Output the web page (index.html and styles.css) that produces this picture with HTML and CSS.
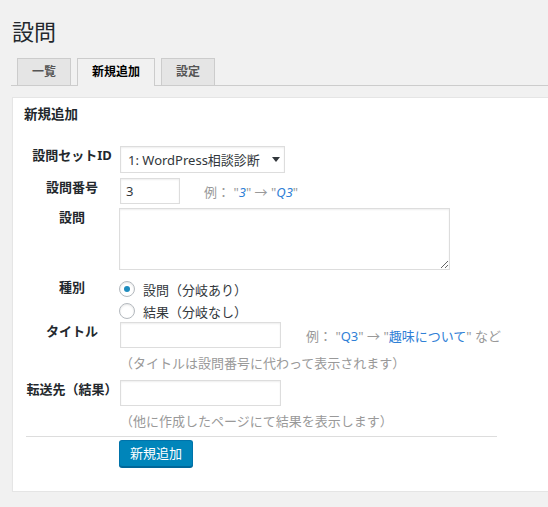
FILE: index.html
```html
<!DOCTYPE html>
<html lang="ja">
<head>
<meta charset="utf-8">
<title>設問</title>
<link rel="stylesheet" href="styles.css">
</head>
<body>
<div class="wrap">
  <h1 class="page-title">設問</h1>
  <nav class="tabs">
    <a class="tab">一覧</a>
    <a class="tab tab-active">新規追加</a>
    <a class="tab">設定</a>
  </nav>
  <section class="panel">
    <h2 class="panel-title">新規追加</h2>
    <div class="row row-set">
      <div class="lbl">設問セットID</div>
      <div class="fld">
        <span class="select-wrap">
          <select class="select"><option>1: WordPress相談診断</option></select>
          <svg class="select-arrow" width="8" height="5" viewBox="0 0 8 5"><path d="M0 0H8L4 5Z" fill="#32373c"/></svg>
        </span>
      </div>
    </div>
    <div class="row row-num">
      <div class="lbl">設問番号</div>
      <div class="fld fld-inline">
        <input class="input input-num" type="text" value="3">
        <span class="example">例： <span class="q">"<i class="blue">3</i>"</span> → <span class="q">"<i class="blue">Q3</i>"</span></span>
      </div>
    </div>
    <div class="row row-text">
      <div class="lbl">設問</div>
      <div class="fld">
        <textarea class="textarea"></textarea>
      </div>
    </div>
    <div class="row row-kind">
      <div class="lbl">種別</div>
      <div class="fld">
        <label class="radio-line"><span class="radio radio-on"></span>設問（分岐あり）</label>
        <label class="radio-line"><span class="radio"></span>結果（分岐なし）</label>
      </div>
    </div>
    <div class="row row-title">
      <div class="lbl">タイトル</div>
      <div class="fld">
        <div class="fld-inline">
          <input class="input input-wide" type="text">
          <span class="example example-title">例： <span class="q">"<span class="blue">Q3</span>"</span> → <span class="q">"<span class="blue">趣味について</span>"</span> など</span>
        </div>
        <p class="help">（タイトルは設問番号に代わって表示されます）</p>
      </div>
    </div>
    <div class="row row-dest">
      <div class="lbl">転送先（結果）</div>
      <div class="fld">
        <input class="input input-wide" type="text">
        <p class="help">（他に作成したページにて結果を表示します）</p>
      </div>
    </div>
    <div class="divider"></div>
    <div class="actions">
      <button class="btn-primary" type="button">新規追加</button>
    </div>
  </section>
</div>
</body>
</html>
```
FILE: styles.css
```css
html, body {
  margin: 0;
  padding: 0;
  background: #f1f1f1;
}
body {
  font-family: "Noto Sans", "Noto Sans CJK JP", sans-serif;
  font-size: 13px;
  color: #444;
  overflow: hidden;
}
.wrap {
  padding-left: 11px;
}
.page-title {
  margin: 0;
  padding: 17px 0 0 1px;
  font-size: 22px;
  line-height: 28px;
  font-weight: 400;
  color: #23282d;
}
.tabs {
  display: flex;
  gap: 6px;
  margin-top: 13px;
  padding-left: 6px;
  border-bottom: 1px solid #ccc;
  height: 27px;
}
.tab {
  display: block;
  box-sizing: border-box;
  height: 27px;
  padding: 0 14px;
  border: 1px solid #ccc;
  border-bottom: none;
  background: #e5e5e5;
  color: #555;
  font-size: 12px;
  font-weight: 700;
  line-height: 26px;
}
.tab-active {
  background: #f1f1f1;
  color: #000;
  height: 28px;
  margin-bottom: -1px;
}
.panel {
  margin: 11px 0 0 1px;
  background: #fff;
  border: 1px solid #e5e5e5;
  border-right: none;
  box-shadow: 0 1px 1px rgba(0,0,0,.04);
  padding: 0 11px 24px 11px;
}
.panel-title {
  margin: 0;
  padding-top: 6px;
  font-size: 13.5px;
  line-height: 20px;
  font-weight: 700;
  color: #23282d;
}
.row {
  display: flex;
  align-items: flex-start;
}
.lbl {
  width: 96px;
  flex: none;
  text-align: center;
  font-weight: 700;
  line-height: 18px;
  color: #23282d;
}
.fld {
  flex: 1;
  min-width: 0;
}
.fld-inline {
  display: flex;
  align-items: center;
}
.row-set { margin-top: 22px; }
.row-num { margin-top: 5px; }
.row-text { margin-top: 4px; }
.row-kind { margin-top: 8px; }
.row-title { margin-top: 0; }
.row-dest { margin-top: 6px; }
.select-wrap {
  position: relative;
  display: inline-block;
}
.select {
  appearance: none;
  -webkit-appearance: none;
  box-sizing: border-box;
  width: 165px;
  height: 27px;
  margin: 0;
  padding: 0 20px 0 7px;
  border: 1px solid #ddd;
  border-radius: 0;
  background: #fff;
  box-shadow: inset 0 1px 2px rgba(0,0,0,.07);
  font-family: inherit;
  font-size: 13px;
  color: #32373c;
}
.select-arrow {
  position: absolute;
  left: 152px;
  top: 11px;
}
.input {
  box-sizing: border-box;
  height: 26px;
  margin: 0;
  padding: 0 5px;
  border: 1px solid #ddd;
  border-radius: 0;
  background: #fff;
  box-shadow: inset 0 1px 2px rgba(0,0,0,.07);
  font-family: inherit;
  font-size: 13px;
  color: #32373c;
  display: block;
}
.input-num { width: 60px; }
.input-wide { width: 161px; }
.textarea {
  display: block;
  box-sizing: border-box;
  width: 331px;
  height: 62px;
  margin: 0 0 0 -1px;
  border: 1px solid #ddd;
  box-shadow: inset 0 1px 2px rgba(0,0,0,.07);
  font-family: inherit;
  font-size: 13px;
}
.example {
  margin-left: 24px;
  color: #999;
  white-space: nowrap;
}
.example-title { margin-left: 25px; }
.blue { color: #2f80d6; }
i.blue { font-style: italic; }
.radio-line {
  display: flex;
  align-items: center;
  height: 22px;
  color: #32373c;
}
.radio {
  box-sizing: border-box;
  width: 16px;
  height: 16px;
  margin: 0 8px 0 -1px;
  border: 1px solid #b4b9be;
  border-radius: 50%;
  background: #fff;
  box-shadow: inset 0 1px 2px rgba(0,0,0,.1);
  display: flex;
  align-items: center;
  justify-content: center;
}
.radio-on::after {
  content: "";
  width: 6px;
  height: 6px;
  border-radius: 50%;
  background: #1e8cbe;
}
.help {
  margin: 4px 0 0 0;
  line-height: 22px;
  color: #999;
}
.divider {
  margin: 4px 0 0 2px;
  width: 471px;
  border-top: 1px solid #ddd;
}
.actions {
  padding-left: 95px;
  margin-top: 3px;
}
.btn-primary {
  box-sizing: border-box;
  height: 27px;
  padding: 0 10px;
  border: 1px solid #0073aa;
  border-bottom-color: #006799;
  border-radius: 3px;
  background: #0085ba;
  box-shadow: 0 1px 0 #006799;
  color: #fff;
  font-family: inherit;
  font-size: 13px;
  line-height: 25px;
}
```
